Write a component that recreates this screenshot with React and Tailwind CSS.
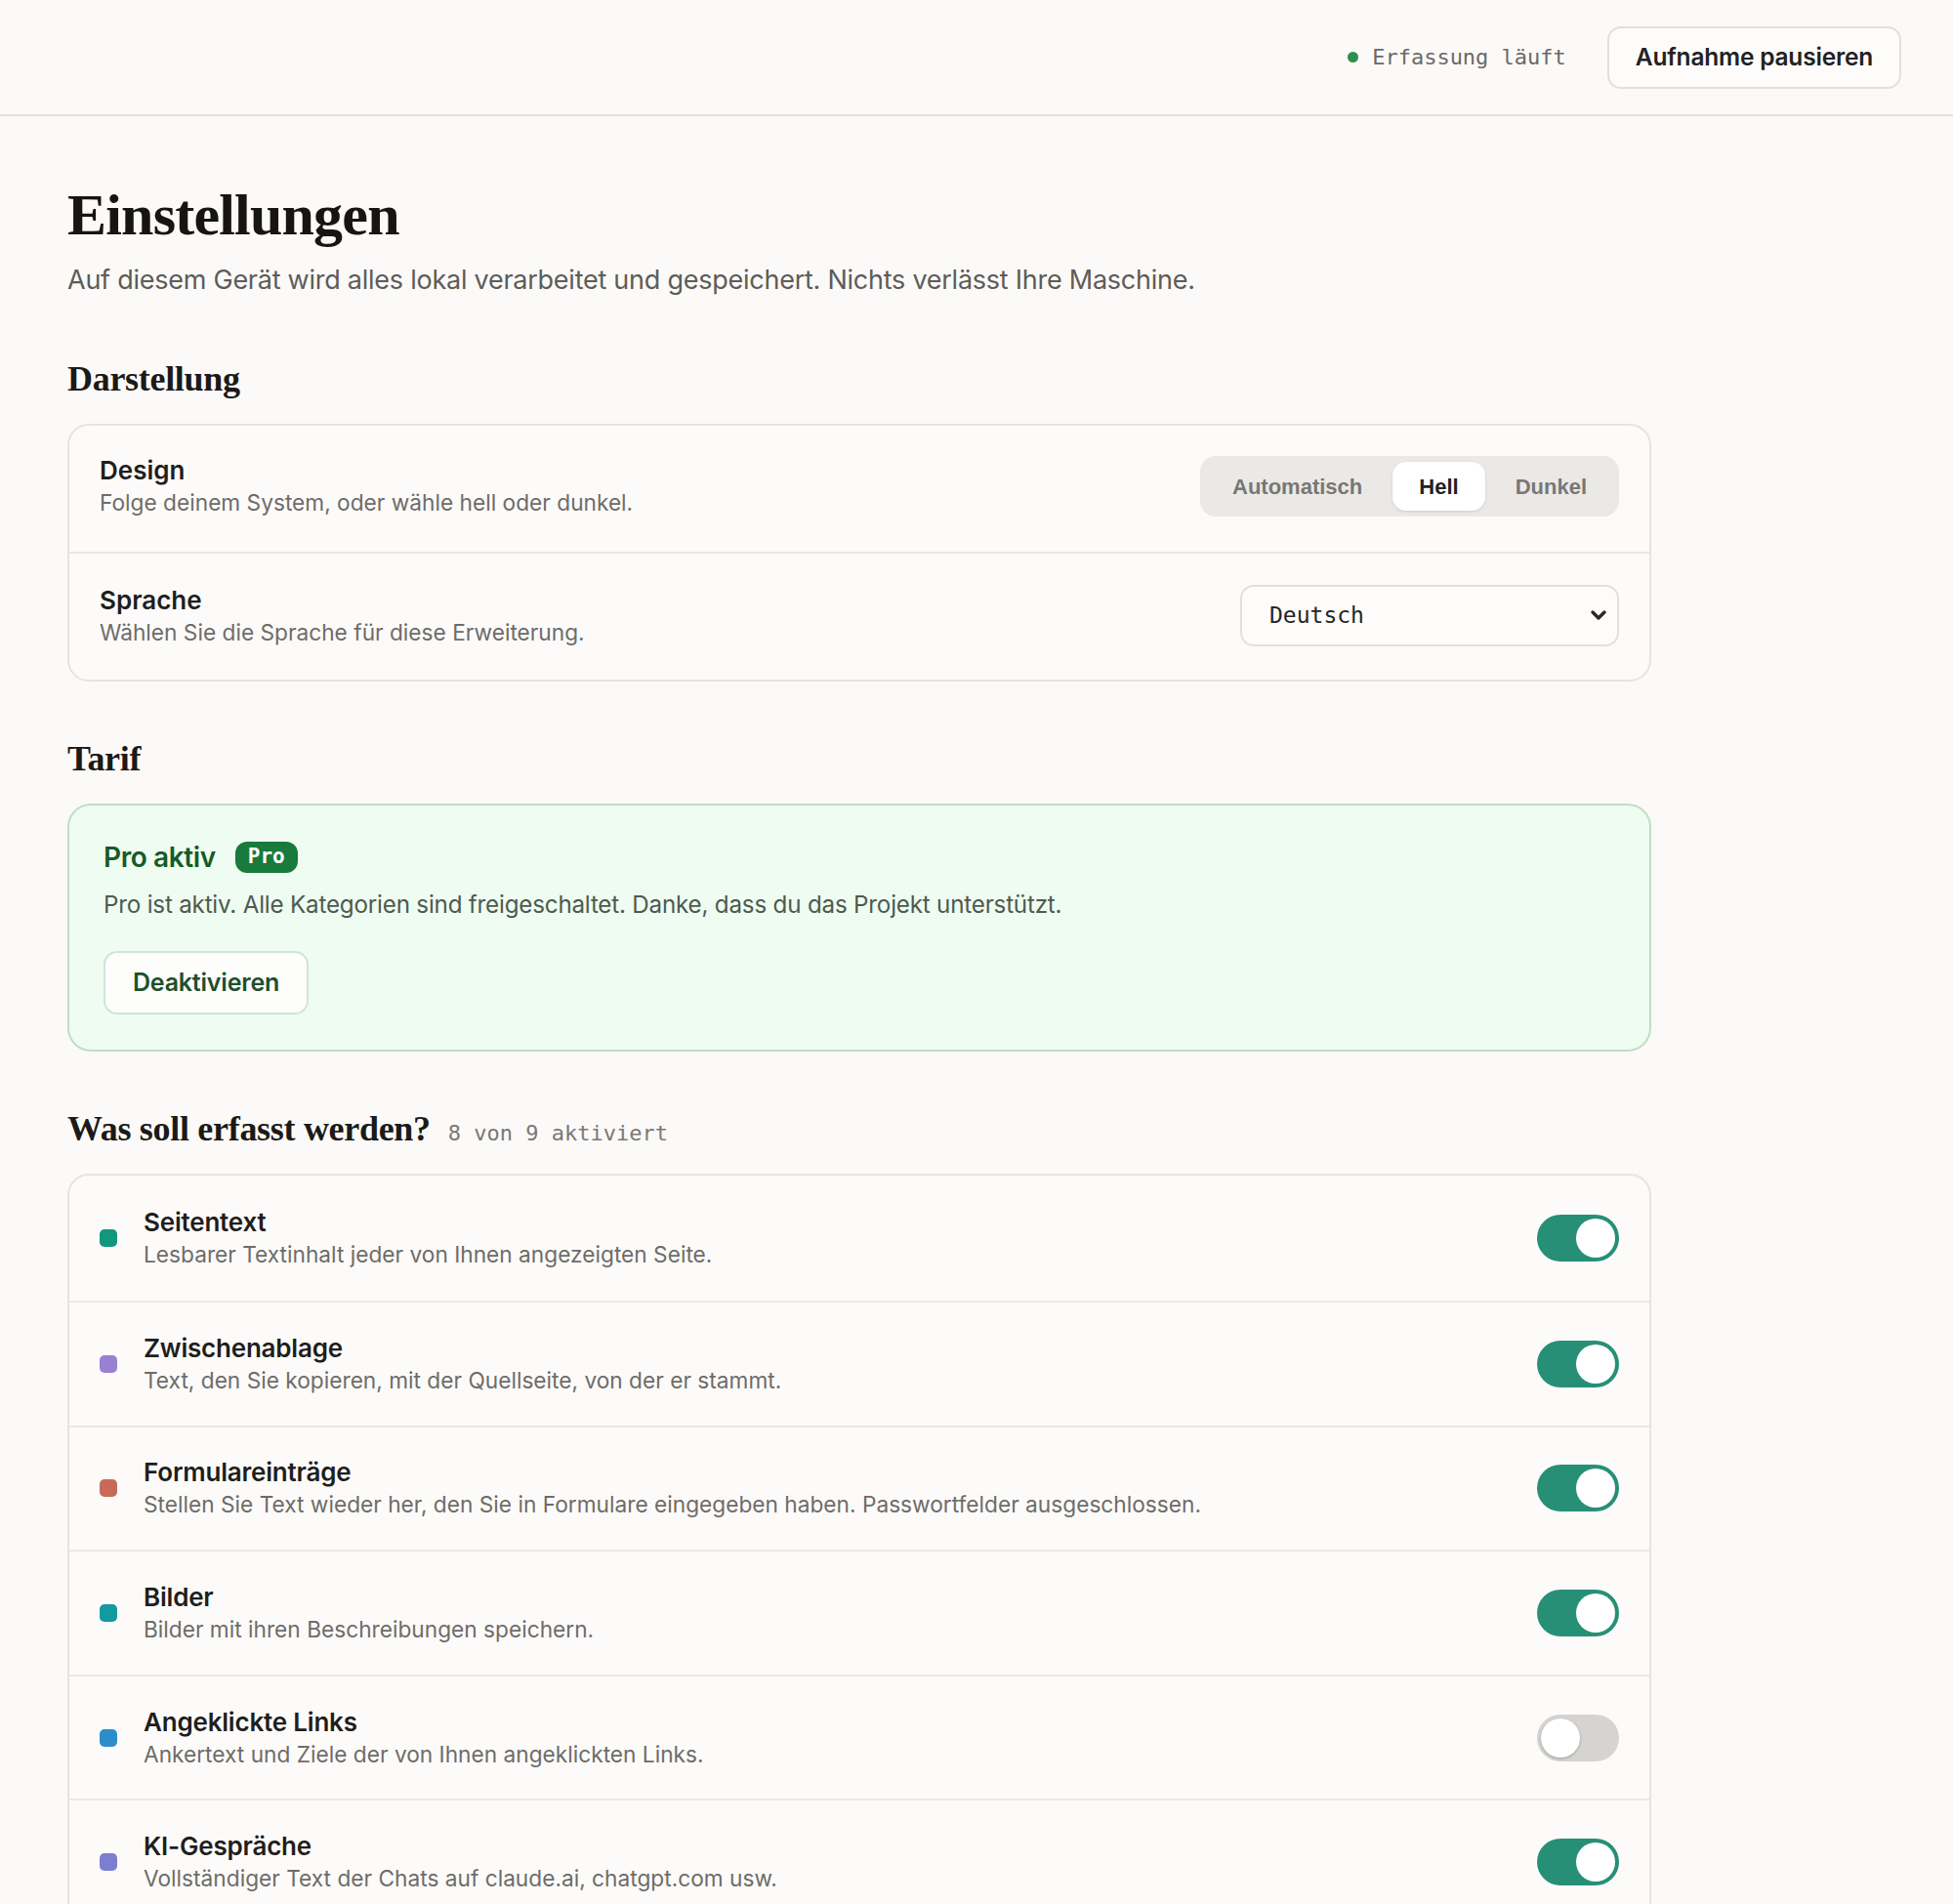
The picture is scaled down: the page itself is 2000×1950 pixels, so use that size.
import React, { useState } from 'react';

const sans = "font-['Inter','Noto_Sans',sans-serif]";
const serif = "font-['Liberation_Serif','DejaVu_Serif',serif]";
const mono = "font-['DejaVu_Sans_Mono','Liberation_Mono',monospace]";

const categories = [
    { id: 'page', title: 'Seitentext', desc: 'Lesbarer Textinhalt jeder von Ihnen angezeigten Seite.', dot: 'bg-[#12977f]', on: true },
    { id: 'clip', title: 'Zwischenablage', desc: 'Text, den Sie kopieren, mit der Quellseite, von der er stammt.', dot: 'bg-[#9a80d2]', on: true },
    { id: 'forms', title: 'Formulareinträge', desc: 'Stellen Sie Text wieder her, den Sie in Formulare eingegeben haben. Passwortfelder ausgeschlossen.', dot: 'bg-[#c8695a]', on: true },
    { id: 'images', title: 'Bilder', desc: 'Bilder mit ihren Beschreibungen speichern.', dot: 'bg-[#14999f]', on: true },
    { id: 'links', title: 'Angeklickte Links', desc: 'Ankertext und Ziele der von Ihnen angeklickten Links.', dot: 'bg-[#2e8ccb]', on: false },
    { id: 'ai', title: 'KI-Gespräche', desc: 'Vollständiger Text der Chats auf claude.ai, chatgpt.com usw.', dot: 'bg-[#7c7ed0]', on: true },
    { id: 'search', title: 'Suchanfragen', desc: 'Begriffe, nach denen Sie in Suchmaschinen suchen.', dot: 'bg-[#d39a3a]', on: true },
    { id: 'video', title: 'Videos', desc: 'Titel und Untertitel der Videos, die Sie ansehen.', dot: 'bg-[#c4577f]', on: true },
    { id: 'tabs', title: 'Tabs', desc: 'Geöffnete Tabs und wie lange Sie dort verbringen.', dot: 'bg-[#6f9a3c]', on: true },
];

const Toggle = ({ on, onClick }) => (
    <button
        onClick={onClick}
        className={`relative w-[84px] h-[48px] rounded-full shrink-0 transition-colors ${on ? 'bg-[#288f77]' : 'bg-[#d6d4d1]'}`}
    >
        <span
            className={`absolute top-[4px] w-[40px] h-[40px] rounded-full bg-white ${on ? 'left-[40px]' : 'left-[4px] shadow-[0_1px_3px_rgba(0,0,0,0.25)]'}`}
        />
    </button>
);

const SectionTitle = ({ children, extra }) => (
    <div className="flex items-baseline gap-[18px] h-[40px] mb-[26px]">
        <h2 className={`${serif} font-bold text-[36px] leading-[40px] text-[#1b1a18] tracking-[-0.3px]`}>{children}</h2>
        {extra}
    </div>
);

export default function App() {
    const [theme, setTheme] = useState('light');
    const [enabled, setEnabled] = useState(() => Object.fromEntries(categories.map(c => [c.id, c.on])));

    const themes = [
        { id: 'auto', label: 'Automatisch' },
        { id: 'light', label: 'Hell' },
        { id: 'dark', label: 'Dunkel' },
    ];

    return (
        <div className={`${sans} min-h-screen bg-[#fbfaf8] text-[#1f1e1c]`}>
            {/* Header */}
            <header className="h-[119px] border-b-2 border-[#e4e2de] flex items-center justify-end pr-[53px]">
                <div className="flex items-center gap-[14px] mr-[42px]">
                    <span className="w-[11px] h-[11px] rounded-full bg-[#2f8f4e]" />
                    <span className={`${mono} text-[22px] text-[#6b6966]`}>Erfassung läuft</span>
                </div>
                <button className="h-[64px] px-[27px] rounded-[14px] border-2 border-[#e2e0dc] bg-[#fdfcfb] text-[24.5px] font-semibold text-[#222] tracking-[-0.2px]">
                    Aufnahme pausieren
                </button>
            </header>

            <main className="ml-[69px] w-[1622px] pb-[80px]">
                <h1 className={`${serif} font-bold text-[60px] leading-[64px] mt-[69px] tracking-[-0.8px] text-[#161513]`}>Einstellungen</h1>
                <p className="mt-[17px] text-[27px] leading-[36px] text-[#5e5c59] tracking-[-0.25px]">
                    Auf diesem Gerät wird alles lokal verarbeitet und gespeichert. Nichts verlässt Ihre Maschine.
                </p>

                {/* Darstellung */}
                <section className="mt-[63px]">
                    <SectionTitle>Darstellung</SectionTitle>
                    <div className="rounded-[22px] border-2 border-[#e6e4e0] bg-[#fcfbfa]">
                        <div className="h-[129px] px-[31px] pb-[5px] flex items-center justify-between">
                            <div>
                                <div className="text-[26px] leading-[34px] font-semibold text-[#1f1e1c]">Design</div>
                                <div className="text-[22.7px] leading-[32px] text-[#6e6c69]">Folge deinem System, oder wähle hell oder dunkel.</div>
                            </div>
                            <div className="flex gap-[4px] p-[6px] rounded-[16px] bg-[#ebe9e6]">
                                {themes.map(t => (
                                    <button
                                        key={t.id}
                                        onClick={() => setTheme(t.id)}
                                        className={`h-[50px] px-[27px] rounded-[14px] font-['Liberation_Sans',sans-serif] font-bold text-[22px] ${
                                            theme === t.id ? 'bg-white text-[#222] shadow-[0_1px_3px_rgba(0,0,0,0.12)]' : 'text-[#797774]'
                                        }`}
                                    >
                                        {t.label}
                                    </button>
                                ))}
                            </div>
                        </div>
                        <div className="h-[131px] px-[31px] pb-[2px] flex items-center justify-between border-t-2 border-[#ebe9e5]">
                            <div>
                                <div className="text-[26px] leading-[34px] font-semibold text-[#1f1e1c]">Sprache</div>
                                <div className="text-[22.7px] leading-[32px] text-[#6e6c69]">Wählen Sie die Sprache für diese Erweiterung.</div>
                            </div>
                            <div className="relative w-[388px] h-[63px] rounded-[14px] border-2 border-[#e2e0dc] bg-[#fdfcfb] flex items-center pl-[28px]">
                                <span className={`${mono} text-[23px] text-[#262523]`}>Deutsch</span>
                                <svg className="absolute right-[10px] top-[22px]" width="18" height="14" viewBox="0 0 18 14" fill="none">
                                    <path d="M3 4 L9 10 L15 4" stroke="#2a2927" strokeWidth="3.4" strokeLinecap="round" strokeLinejoin="round" />
                                </svg>
                            </div>
                        </div>
                    </div>
                </section>

                {/* Tarif */}
                <section className="mt-[59px]">
                    <SectionTitle>Tarif</SectionTitle>
                    <div className="rounded-[24px] border-2 border-[#c0dec6] bg-[#effcf1] pl-[35px] pt-[35px] pb-[36px]">
                        <div className="flex items-center gap-[20px] h-[36px]">
                            <span className="text-[28px] font-semibold text-[#145c27] tracking-[-0.4px]">Pro aktiv</span>
                            <span className={`${mono} h-[32px] px-[13px] rounded-[12px] bg-[#187a3c] text-white text-[21px] font-bold flex items-center`}>Pro</span>
                        </div>
                        <p className="mt-[14px] text-[24.2px] leading-[34px] text-[#4d5a50] tracking-[-0.2px]">
                            Pro ist aktiv. Alle Kategorien sind freigeschaltet. Danke, dass du das Projekt unterstützt.
                        </p>
                        <button className="mt-[30px] h-[65px] px-[28px] rounded-[14px] border-2 border-[#d2e3d6] bg-[#fdfdfc] text-[25px] font-semibold text-[#1f4f2c] tracking-[-0.2px]">
                            Deaktivieren
                        </button>
                    </div>
                </section>

                {/* Kategorien */}
                <section className="mt-[59px]">
                    <SectionTitle extra={<span className={`${mono} text-[22px] text-[#7a7875]`}>8 von 9 aktiviert</span>}>
                        Was soll erfasst werden?
                    </SectionTitle>
                    <div className="rounded-[22px] border-2 border-[#e6e4e0] bg-[#fcfbfa]">
                        {categories.map((c, i) => (
                            <div
                                key={c.id}
                                className={`${i === 0 ? 'h-[128px]' : 'h-[127.6px] border-t-2 border-[#ebe9e5]'} px-[31px] flex items-center`}
                            >
                                <span className={`w-[18px] h-[18px] rounded-[5px] shrink-0 ${c.dot}`} />
                                <div className="ml-[27px] flex-1">
                                    <div className="text-[26px] leading-[34px] font-semibold text-[#1f1e1c] tracking-[-0.2px]">{c.title}</div>
                                    <div className="text-[22.7px] leading-[32px] text-[#6e6c69]">{c.desc}</div>
                                </div>
                                <Toggle on={enabled[c.id]} onClick={() => setEnabled(p => ({ ...p, [c.id]: !p[c.id] }))} />
                            </div>
                        ))}
                    </div>
                </section>
            </main>
        </div>
    );
}
